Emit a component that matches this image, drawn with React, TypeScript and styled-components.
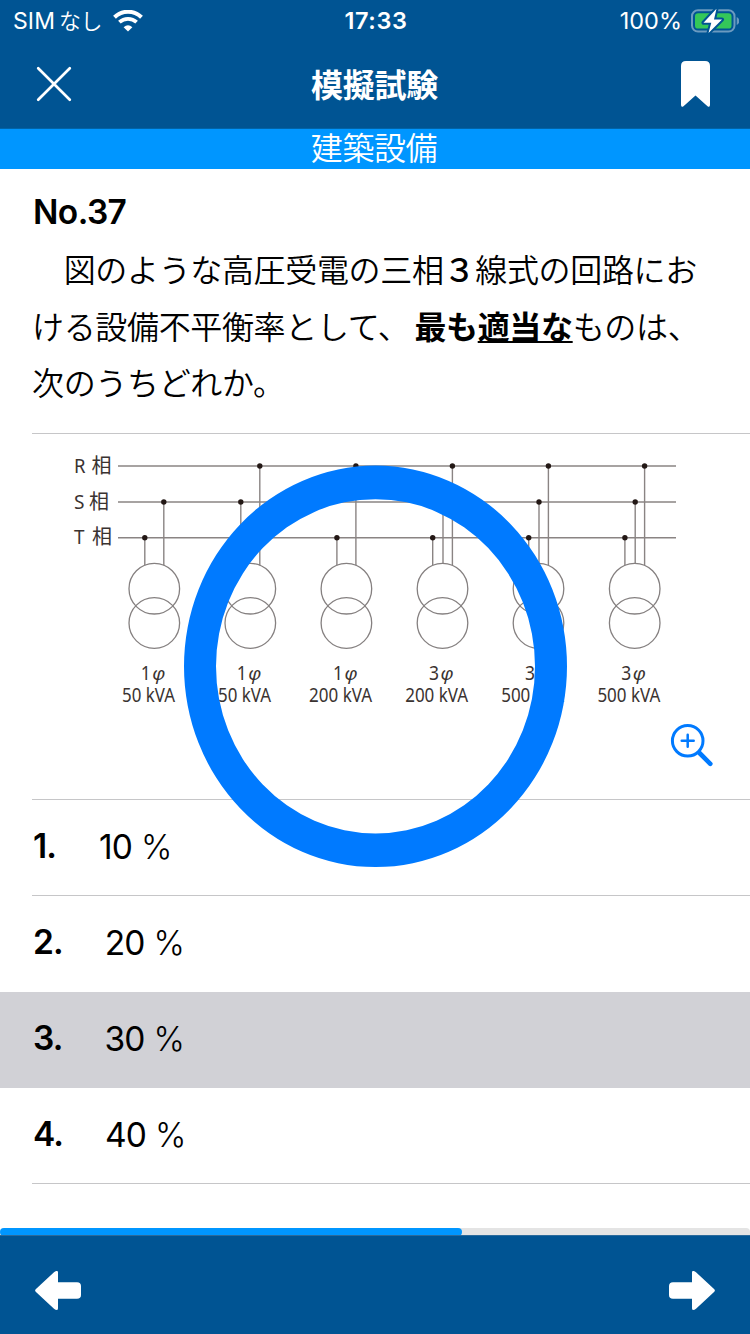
import React from "react";
import styled, { createGlobalStyle } from "styled-components";

const GlobalStyle = createGlobalStyle`
  * { box-sizing: border-box; }
  body { margin: 0; background: #fff; }
`;

const NAVY = "#005493";
const SKY = "#0096ff";
const BLUE = "#007aff";

const Screen = styled.div`
  position: relative;
  width: 750px;
  height: 1334px;
  display: flex;
  flex-direction: column;
  overflow: hidden;
  background: #fff;
  color: #000;
  font-family: Inter, "Noto Sans CJK JP", sans-serif;
`;

const StatusBar = styled.div`
  height: 40px;
  flex: none;
  display: grid;
  grid-template-columns: 1fr auto 1fr;
  align-items: center;
  padding: 0 11px 0 13px;
  background: ${NAVY};
  color: #fff;
  font-size: 24px;
  line-height: 40px;
  white-space: nowrap;
`;

const StatusGroup = styled.div<{ $end?: boolean }>`
  display: flex;
  align-items: center;
  height: 40px;
  gap: ${(p) => (p.$end ? 9 : 11)}px;
  justify-content: ${(p) => (p.$end ? "flex-end" : "flex-start")};
`;

const Carrier = styled.span`
  font-size: 23px;
  font-weight: 400;
  letter-spacing: 0.1px;
  padding-top: 1px;
`;

const CarrierKana = styled.span`
  font-size: 22px;
  font-weight: 350;
  letter-spacing: -0.4px;
  margin-left: 4px;
`;

const Clock = styled.span`
  font-size: 23.5px;
  font-weight: 600;
  letter-spacing: 0.6px;
  padding-top: 1px;
`;

const Percent = styled.span`
  font-size: 23.5px;
  letter-spacing: 0;
  padding-top: 1px;
`;

const NavBar = styled.header`
  height: 89px;
  flex: none;
  display: grid;
  grid-template-columns: 1fr auto 1fr;
  align-items: center;
  padding: 0 40px 0 36px;
  background: ${NAVY};
  border-bottom: 1px solid #0064a9;
  color: #fff;
`;

const IconButton = styled.button<{ $end?: boolean }>`
  display: flex;
  padding: 0;
  border: 0;
  background: none;
  color: inherit;
  justify-self: ${(p) => (p.$end ? "end" : "start")};
`;

const Title = styled.h1`
  margin: 0;
  padding: 3px 0 0 3px;
  font-size: 32px;
  line-height: 40px;
  font-weight: 700;
  letter-spacing: -0.3px;
`;

const Subject = styled.div`
  height: 40px;
  flex: none;
  padding-right: 2px;
  background: ${SKY};
  color: #fff;
  font-size: 32px;
  line-height: 39px;
  font-weight: 350;
  letter-spacing: -0.4px;
  text-align: center;
`;

const Question = styled.section`
  height: 265px;
  flex: none;
  margin-left: 32px;
  padding-top: 18px;
  border-bottom: 1px solid #c6c6c8;
`;

const Number = styled.h2`
  margin: 0 0 0 1px;
  font-size: 33.5px;
  line-height: 50px;
  font-weight: 600;
  letter-spacing: -0.6px;
`;

const Statement = styled.p`
  margin: 6px 0 0;
  font-size: 32px;
  line-height: 56.5px;
  font-weight: 350;
  letter-spacing: -0.34px;
  white-space: nowrap;
`;

const Digit = styled.span`
  font-weight: 500;
`;

const Strong = styled.strong<{ $underlined?: boolean }>`
  font-weight: 700;
  margin-left: ${(p) => (p.$underlined ? 0 : 5)}px;
  text-decoration: ${(p) => (p.$underlined ? "underline" : "none")};
  text-decoration-thickness: 2px;
  text-underline-offset: 2px;
  text-decoration-skip-ink: none;
`;

const Figure = styled.section`
  position: relative;
  height: 366px;
  flex: none;
  &::after {
    content: "";
    display: block;
    margin-left: 32px;
    height: 1px;
    background: #c6c6c8;
  }
`;

const Diagram = styled.svg`
  display: block;
  width: 750px;
  height: 365px;
`;

const ZoomButton = styled.button`
  position: absolute;
  right: 36px;
  bottom: 32px;
  display: flex;
  padding: 0;
  border: 0;
  background: none;
`;

const Choices = styled.ol`
  list-style: none;
  margin: 0;
  padding: 0;
  flex: none;
`;

const Choice = styled.li<{ $selected?: boolean }>`
  height: 96px;
  padding-left: 32px;
  background: ${(p) => (p.$selected ? "#d1d1d6" : "transparent")};
`;

const ChoiceBody = styled.div<{ $rule: boolean }>`
  height: 96px;
  display: flex;
  align-items: center;
  border-bottom: 1px solid ${(p) => (p.$rule ? "#c6c6c8" : "transparent")};
  font-size: 33.5px;
  line-height: 42px;
`;

const ChoiceNumber = styled.span`
  font-weight: 600;
  margin: -4px 0 0 1px;
  letter-spacing: -0.9px;
`;

const ChoiceText = styled.span<{ $gap: number }>`
  margin: -2px 0 0 ${(p) => p.$gap}px;
  letter-spacing: -0.9px;
  white-space: pre;
`;

const Unit = styled.span`
  font-size: 33.5px;
  font-weight: 300;
  margin-left: 0.5px;
`;

const Spacer = styled.div`
  flex: 1;
`;

const Track = styled.div`
  height: 8px;
  flex: none;
  background: #e4e4e4;
  border-radius: 4px 4px 0 0;
`;

const Fill = styled.div`
  width: 462px;
  height: 8px;
  border-radius: 4px;
  background: ${SKY};
`;

const Toolbar = styled.footer`
  height: 99px;
  flex: none;
  margin-top: -1px;
  display: flex;
  justify-content: space-between;
  align-items: flex-start;
  padding: 35px 35px 0;
  background: ${NAVY};
  color: #fff;
  border-top: 1px solid #2b6a9b;
`;

const Mark = styled.svg`
  position: absolute;
  left: 184px;
  top: 465px;
  pointer-events: none;
`;

const CHOICES = [
  { value: "10", gap: 43, rule: true },
  { value: "20", gap: 42, rule: false },
  { value: "30", gap: 42, rule: false, selected: true },
  { value: "40", gap: 42, rule: true },
];

const PHASE_Y = { R: 32, S: 68, T: 103.7 };
type Phase = keyof typeof PHASE_Y;

const PHASES: { name: Phase; x: number; width: number; kanji: number }[] = [
  { name: "R", x: 74, width: 11.5, kanji: 91.5 },
  { name: "S", x: 74, width: 10.5, kanji: 89 },
  { name: "T", x: 74, width: 10.5, kanji: 92 },
];

const LOADS: { x: number; phases: Phase[]; power: string }[] = [
  { x: 154.3, phases: ["T", "S"], power: "50 kVA" },
  { x: 250.3, phases: ["S", "R"], power: "50 kVA" },
  { x: 346.4, phases: ["T", "R"], power: "200 kVA" },
  { x: 442.5, phases: ["T", "S", "R"], power: "200 kVA" },
  { x: 538.5, phases: ["T", "S", "R"], power: "500 kVA" },
  { x: 634.7, phases: ["T", "S", "R"], power: "500 kVA" },
];

function Load({ x, phases, power }: (typeof LOADS)[number]) {
  const offsets = phases.length === 2 ? [-9.5, 9.5] : [-9.8, 0.5, 9.9];
  const width = power.length === 6 ? 53 : 63;
  return (
    <g>
      {phases.map((p, i) => (
        <g key={p}>
          <path
            d={`M${x + offsets[i]} ${PHASE_Y[p]}V${offsets[i] === 0.5 ? 129.5 : 131.5}`}
            stroke="#8a8483"
            strokeWidth="1.4"
          />
          <circle cx={x + offsets[i]} cy={PHASE_Y[p]} r="2.7" fill="#231815" />
        </g>
      ))}
      <g fill="none" stroke="#858080" strokeWidth="1.3">
        <circle cx={x} cy="154.7" r="25.3" />
        <circle cx={x} cy="189" r="25.3" />
      </g>
      <text x={x - 13.5} y="245.7" textLength="10" lengthAdjust="spacingAndGlyphs">
        {phases.length === 2 ? 1 : 3}
      </text>
      <text x={x - 2} y="245.7" fontStyle="italic" fontSize="19">φ</text>
      <text
        x={power.length === 6 ? x - 32.3 : x - 37.3}
        y="268.3"
        textLength={width}
        lengthAdjust="spacingAndGlyphs"
      >
        {power}
      </text>
    </g>
  );
}

const Arrow = ({ flip }: { flip?: boolean }) => (
  <svg width="46" height="40" viewBox="0 0 46 40" fill="currentColor">
    <path
      transform={flip ? "matrix(-1 0 0 1 46 0)" : undefined}
      d="M.7 18.2 19 1.2Q20.5-.1 22-.1 23 .1 23 1.6V11.2H42Q46 11.2 46 15V24Q46 27.8 42 27.8H23V37.3Q23 38.8 22 39 20.5 39 19 37.7L.7 20.7Q-.5 19.5.7 18.2Z"
    />
  </svg>
);

export default function App() {
  return (
    <Screen>
      <GlobalStyle />
      <StatusBar>
        <StatusGroup>
          <Carrier>
            SIM<CarrierKana>なし</CarrierKana>
          </Carrier>
          <svg width="30" height="22" viewBox="0 0 30 22" fill="none" stroke="#fff">
            <path d="M1.5 7.2Q7.2 1.7 15 1.7T28.5 7.2" strokeWidth="4" />
            <path d="M6.4 12.1Q10 8.8 15 8.8T23.6 12.1" strokeWidth="3.8" />
            <path d="M10.6 17.2Q15 13.4 19.4 17.2L15 21.6Z" fill="#fff" stroke="none" />
          </svg>
        </StatusGroup>
        <Clock>17:33</Clock>
        <StatusGroup $end>
          <Percent>100%</Percent>
          <svg width="48" height="24" viewBox="0 0 48 24">
            <rect x="1" y="1.2" width="42.5" height="21.4" rx="6" fill="none" stroke="#6b9ac0" strokeWidth="2" />
            <path d="M45.7 8Q48.3 9 48.3 12T45.7 16Z" fill="#6b9ac0" />
            <rect x="4" y="4.2" width="36.5" height="15.4" rx="3.2" fill="#34c759" />
            <path
              d="M25.5-.3 12.5 13.7H20.3L17.5 24 31 10.5H23Z"
              fill="#fff"
              stroke={NAVY}
              strokeWidth="4"
              paintOrder="stroke"
              strokeLinejoin="round"
            />
          </svg>
        </StatusGroup>
      </StatusBar>

      <NavBar>
        <IconButton aria-label="閉じる">
          <svg width="36" height="36" viewBox="0 0 36 36" stroke="#fff" strokeWidth="2.7" strokeLinecap="round">
            <path d="M2.2 2.2 33.8 33.8M33.8 2.2 2.2 33.8" />
          </svg>
        </IconButton>
        <Title>模擬試験</Title>
        <IconButton $end aria-label="ブックマーク">
          <svg width="29" height="46" viewBox="0 0 29 46" fill="#fff">
            <path d="M5 0H24Q29 0 29 5V43.8Q29 46.8 26.5 45.2L14.5 34.5 2.5 45.2Q0 46.8 0 43.8V5Q0 0 5 0Z" />
          </svg>
        </IconButton>
      </NavBar>
      <Subject>建築設備</Subject>

      <Question>
        <Number>No.37</Number>
        <Statement>
          {"　図のような高圧受電の三相"}
          <Digit>３</Digit>線式の回路にお
          <br />
          ける設備不平衡率として、<Strong>最も</Strong>
          <Strong $underlined>適当な</Strong>ものは、
          <br />
          次のうちどれか。
        </Statement>
      </Question>

      <Figure>
        <Diagram viewBox="0 0 750 365" fontFamily='"Noto Sans", "Noto Sans CJK JP", sans-serif' fontSize="19.5" fill="#3a3331">
          {PHASES.map((p) => (
            <g key={p.name}>
              <path d={`M118 ${PHASE_Y[p.name]}H676`} stroke="#8a8483" strokeWidth="1.5" />
              <text x={p.x} y={PHASE_Y[p.name] + 6.7} textLength={p.width} lengthAdjust="spacingAndGlyphs">
                {p.name}
              </text>
              <text x={p.kanji} y={PHASE_Y[p.name] + 6.5} fontFamily='"Noto Sans CJK JP", sans-serif' fontSize="20">相</text>
            </g>
          ))}
          {LOADS.map((load) => (
            <Load key={load.x} {...load} />
          ))}
        </Diagram>
        <ZoomButton aria-label="拡大">
          <svg width="44" height="44" viewBox="0 0 44 44" fill="none" stroke={BLUE} strokeLinecap="round">
            <circle cx="17.7" cy="16.8" r="15.3" strokeWidth="3" />
            <path d="M11.7 16.8H23.7M17.7 10.8V22.8" strokeWidth="2.5" />
            <path d="M29.5 29 40.3 39.8" strokeWidth="4.6" />
          </svg>
        </ZoomButton>
      </Figure>

      <Choices>
        {CHOICES.map((c, i) => (
          <Choice key={c.value} $selected={c.selected}>
            <ChoiceBody $rule={c.rule}>
              <ChoiceNumber>{i + 1}.</ChoiceNumber>
              <ChoiceText $gap={c.gap}>
                {c.value} <Unit>%</Unit>
              </ChoiceText>
            </ChoiceBody>
          </Choice>
        ))}
      </Choices>

      <Spacer />
      <Track>
        <Fill />
      </Track>
      <Toolbar>
        <IconButton aria-label="前へ">
          <Arrow />
        </IconButton>
        <IconButton aria-label="次へ">
          <Arrow flip />
        </IconButton>
      </Toolbar>

      <Mark width="383" height="402" viewBox="0 0 383 402">
        <path
          fill={BLUE}
          fillRule="evenodd"
          d="M0 201.3A191.5 200.7 0 0 1 383 201.3A191.5 200.7 0 0 1 0 201.3ZM32 201.3A159.5 167.2 0 0 0 351 201.3A159.5 167.2 0 0 0 32 201.3Z"
        />
      </Mark>
    </Screen>
  );
}
